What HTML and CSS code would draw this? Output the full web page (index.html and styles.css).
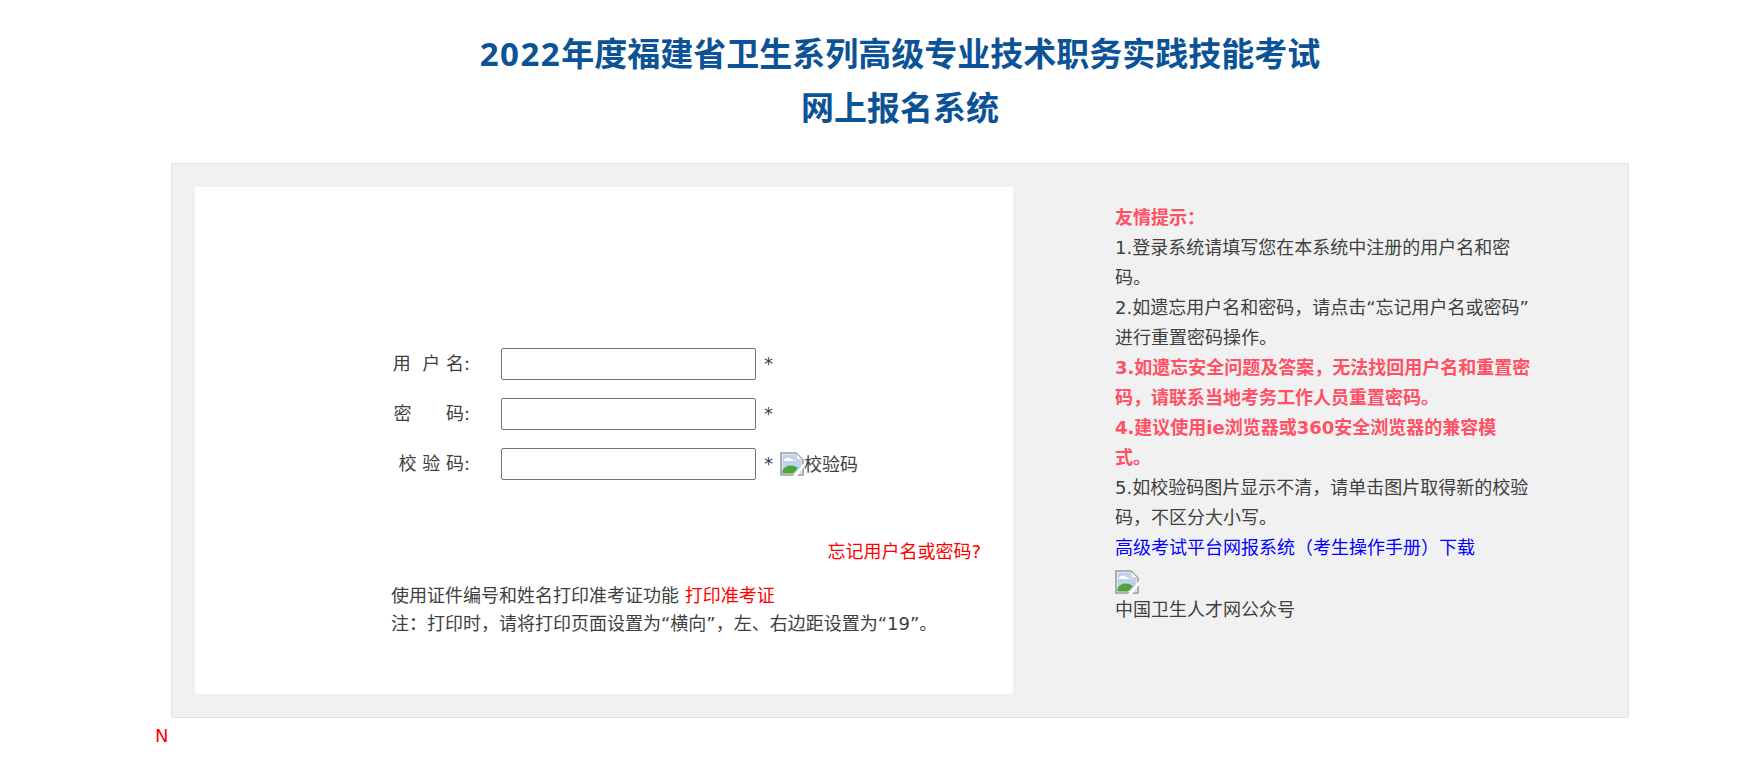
FILE: index.html
```html
<!DOCTYPE html>
<html lang="zh-CN">
<head>
<meta charset="utf-8">
<title>网上报名系统</title>
<link rel="stylesheet" href="styles.css">
</head>
<body>
<div class="wrap">
  <header class="head">
    <h1><span class="yr">2022</span>年度福建省卫生系列高级专业技术职务实践技能考试</h1>
    <h1>网上报名系统</h1>
  </header>
  <main class="panel">
    <section class="login">
      <form class="form">
        <div class="row"><label class="lab">用  户 名:</label><input class="inp" type="text"><span class="star">*</span></div>
        <div class="row"><label class="lab">密      码:</label><input class="inp" type="password"><span class="star">*</span></div>
        <div class="row"><label class="lab">校 验 码:</label><input class="inp" type="text"><span class="star">*</span>
          <svg class="broken broken-inline" viewBox="0 0 24 24"><use href="#brk"/></svg><span class="alt">校验码</span></div>
      </form>
      <p class="forgot"><a href="#">忘记用户名或密码?</a></p>
      <p class="print">使用证件编号和姓名打印准考证功能 <a href="#">打印准考证</a></p>
      <p class="print">注：打印时，请将打印页面设置为“横向”，左、右边距设置为“19”。</p>
    </section>
    <aside class="tips">
      <p class="hot">友情提示：</p>
      <p>1.登录系统请填写您在本系统中注册的用户名和密码。</p>
      <p>2.如遗忘用户名和密码，请点击“忘记用户名或密码”进行重置密码操作。</p>
      <p class="hot">3.如遗忘安全问题及答案，无法找回用户名和重置密码，请联系当地考务工作人员重置密码。</p>
      <p class="hot">4.建议使用ie浏览器或360安全浏览器的兼容模式。</p>
      <p>5.如校验码图片显示不清，请单击图片取得新的校验码，不区分大小写。</p>
      <p><a class="manual" href="#">高级考试平台网报系统（考生操作手册）下载</a></p>
      <svg class="broken broken-block" viewBox="0 0 24 24"><use href="#brk"/></svg>
      <p>中国卫生人才网公众号</p>
    </aside>
  </main>
  <div class="note">N</div>
</div>
<svg class="defs" width="0" height="0">
  <defs>
    <g id="brk">
      <path d="M1 1H16L23 8V23H1Z" fill="#fff" stroke="#999" stroke-width="1.6"/>
      <path d="M2.5 2.5H15V9H21.5V21.5H2.5Z" fill="#bcd2ee"/>
      <path d="M4 8c2-3 5-3 7-1 2 0 3 1 3 2H4Z" fill="#fff"/>
      <path d="M2.5 21.5V18C6 13 12 12 18 16L13 21.5Z" fill="#4fa336"/>
      <path d="M16 1.5V8H22.5" fill="#fff" stroke="#aaa"/>
      <path d="M13 24L24 11V15L17 24Z" fill="#fff"/>
    </g>
  </defs>
</svg>
</body>
</html>
```
FILE: styles.css
```css
* { box-sizing: border-box; }
html, body { margin: 0; padding: 0; background: #fff; }
body {
  font-family: "DejaVu Sans", "Noto Sans CJK SC", sans-serif;
  font-size: 18px;
  line-height: 30px;
  color: #404040;
}
p { margin: 0; }
a { text-decoration: none; }
.wrap { width: 1490px; margin-left: 155px; }
.head { padding-top: 27px; margin-bottom: 28px; text-align: center; }
.head h1 {
  margin: 0;
  font-family: "Noto Sans", "Noto Sans CJK SC", sans-serif;
  font-size: 33px;
  line-height: 54px;
  font-weight: 700;
  color: #0b5396;
}
.yr { letter-spacing: 1.5px; }
.panel {
  display: flex;
  width: 1458px;
  height: 555px;
  margin-left: 16px;
  padding: 23px;
  background: #f1f1f1;
  border: 1px solid #e2e2e2;
}
.login {
  width: 818px;
  height: 507px;
  padding: 161px 32px 0 196px;
  background: #fff;
}
.form { margin-left: -10px; }
.row { display: flex; align-items: center; height: 32px; margin-bottom: 18px; }
.lab { width: 89px; margin-right: 31px; text-align: right; white-space: pre; }
.inp {
  width: 255px;
  height: 32px;
  margin: 0;
  padding: 1px 2px;
  background: #fff;
  border: 1px solid #767676;
  border-radius: 2px;
}
.star { margin-left: 8px; }
.broken { width: 24px; height: 24px; }
.broken-inline { margin-left: 7px; }
.alt { padding-top: 2px; }
.broken-block { display: block; margin: 7px 0 1px; }
.forgot { margin-top: 57px; margin-bottom: 15px; text-align: right; }
.forgot a, .print a { color: #f00; }
.print { line-height: 28px; }
.tips { width: 416px; margin-left: 102px; padding-top: 16px; }
.hot { color: #ff5065; font-weight: 700; }
.manual { color: #00f; }
.note { margin-top: 3px; color: #f00; }
.defs { position: absolute; }
```
